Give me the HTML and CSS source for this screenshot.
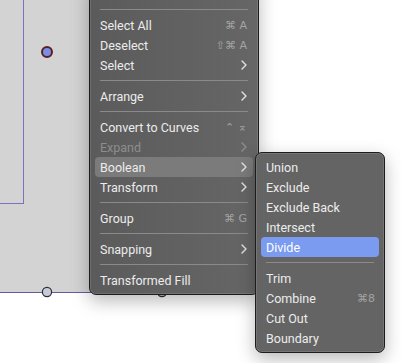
FILE: index.html
```html
<!DOCTYPE html>
<html lang="en">
<head>
  <meta charset="UTF-8" />
  <title>Boolean menu</title>
  <link rel="stylesheet" href="styles.css">
</head>
<body>
  <div class="canvas">
    <div class="artboard"></div>
    <div class="shape"></div>
    <svg class="handle handle-top" width="14" height="14" viewBox="0 0 14 14">
      <circle cx="7" cy="7" r="5" fill="#7b8de6" stroke="#5a1f1f" stroke-width="2"/>
    </svg>
    <svg class="handle handle-left" width="14" height="14" viewBox="0 0 14 14">
      <circle cx="7" cy="7" r="4.6" fill="#c6cad9" stroke="#2e2e2e" stroke-width="1.2"/>
    </svg>
    <svg class="handle handle-mid" width="14" height="14" viewBox="0 0 14 14">
      <circle cx="7" cy="7" r="4.6" fill="#c6cad9" stroke="#2e2e2e" stroke-width="1.2"/>
    </svg>

    <div class="menu main-menu">
      <div class="sep"></div>
      <div class="item"><span>Select All</span><span class="key">⌘ A</span></div>
      <div class="item"><span>Deselect</span><span class="key">⇧⌘ A</span></div>
      <div class="item"><span>Select</span><svg class="chev" width="6" height="10" viewBox="0 0 6 10"><polyline points="1,1 5,5 1,9"/></svg></div>
      <div class="sep"></div>
      <div class="item"><span>Arrange</span><svg class="chev" width="6" height="10" viewBox="0 0 6 10"><polyline points="1,1 5,5 1,9"/></svg></div>
      <div class="sep"></div>
      <div class="item"><span>Convert to Curves</span><span class="key">⌃ ⌅</span></div>
      <div class="item disabled"><span>Expand</span><svg class="chev" width="6" height="10" viewBox="0 0 6 10"><polyline points="1,1 5,5 1,9"/></svg></div>
      <div class="item open"><span>Boolean</span><svg class="chev" width="6" height="10" viewBox="0 0 6 10"><polyline points="1,1 5,5 1,9"/></svg></div>
      <div class="item"><span>Transform</span><svg class="chev" width="6" height="10" viewBox="0 0 6 10"><polyline points="1,1 5,5 1,9"/></svg></div>
      <div class="sep"></div>
      <div class="item"><span>Group</span><span class="key">⌘ G</span></div>
      <div class="sep"></div>
      <div class="item"><span>Snapping</span><svg class="chev" width="6" height="10" viewBox="0 0 6 10"><polyline points="1,1 5,5 1,9"/></svg></div>
      <div class="sep"></div>
      <div class="item"><span>Transformed Fill</span></div>
    </div>

    <div class="menu sub-menu">
      <div class="item"><span>Union</span></div>
      <div class="item"><span>Exclude</span></div>
      <div class="item"><span>Exclude Back</span></div>
      <div class="item"><span>Intersect</span></div>
      <div class="item active"><span>Divide</span></div>
      <div class="sep"></div>
      <div class="item"><span>Trim</span></div>
      <div class="item"><span>Combine</span><span class="key">⌘8</span></div>
      <div class="item"><span>Cut Out</span></div>
      <div class="item"><span>Boundary</span></div>
    </div>
  </div>
</body>
</html>
```

FILE: styles.css
```css
* {
  box-sizing: border-box;
}
body {
  margin: 0;
  background: #fff;
  font-family: Roboto, "Liberation Sans", sans-serif;
}
.canvas {
  position: relative;
  width: 402px;
  height: 363px;
  overflow: hidden;
  background: #fff;
}
.artboard {
  position: absolute;
  left: 0;
  top: 0;
  width: 200px;
  height: 293px;
  background: #d3d3d3;
  border-bottom: 1.5px solid #625ba3;
}
.shape {
  position: absolute;
  left: -40px;
  top: -10px;
  width: 64px;
  height: 214px;
  border: 1.5px solid #7a72bb;
}
.handle {
  position: absolute;
}
.handle-top {
  left: 40px;
  top: 45px;
}
.handle-left {
  left: 40px;
  top: 285px;
}
.handle-mid {
  left: 155px;
  top: 285px;
}

.menu {
  position: absolute;
  display: flex;
  flex-direction: column;
  padding: 4px 5px;
  border: 1px solid #1c1c1c;
  border-radius: 7px;
  box-shadow: inset 0 0 0 1px rgba(255, 255, 255, 0.12), 0 6px 18px rgba(0, 0, 0, 0.28);
  color: #ececec;
  font-size: 12.5px;
}
.main-menu {
  left: 89px;
  top: -20px;
  width: 170px;
  padding-top: 23px;
  background: linear-gradient(90deg, #5b5b5b, #666666);
}
.sub-menu {
  left: 255px;
  top: 152px;
  width: 130px;
  background: #646464;
}
.item {
  display: flex;
  align-items: center;
  justify-content: space-between;
  height: 20px;
  padding: 0 6px 0 5px;
  border-radius: 4px;
  white-space: nowrap;
}
.item.open {
  background: #7b7b7b;
}
.item.active {
  background: #7a9bf0;
  color: #fff;
}
.item.disabled {
  color: #8d8d8d;
}
.sub-menu .item {
  padding-right: 4px;
}
.key {
  color: #a3a3a3;
  font-family: "DejaVu Sans", sans-serif;
  font-size: 11px;
}
.chev {
  fill: none;
  stroke: #e2e2e2;
  stroke-width: 1.4;
  stroke-linecap: round;
  stroke-linejoin: round;
}
.disabled .chev {
  stroke: #8d8d8d;
}
.sep {
  height: 11px;
  display: flex;
  align-items: center;
  padding: 0 5px;
}
.sep::after {
  content: "";
  flex: 1;
  height: 1px;
  background: #8a8a8a;
}
```
